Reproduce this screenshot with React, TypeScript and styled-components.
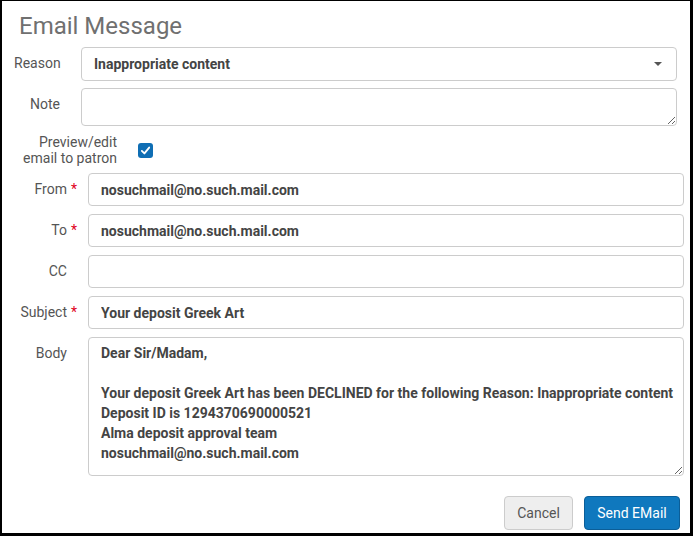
import React from "react";
import styled, { createGlobalStyle } from "styled-components";

const Global = createGlobalStyle`
  html, body { margin: 0; padding: 0; background: #000; }
  body { font-family: Roboto, "Liberation Sans", Arial, sans-serif; }
  * { box-sizing: border-box; }
`;

const Frame = styled.div`
  width: 693px;
  height: 536px;
  border-style: solid;
  border-color: #000;
  border-width: 1px 3px 3px 2px;
  background: #fff;
  padding: 9px 0 0 0;
  display: flex;
  flex-direction: column;
`;

const Title = styled.h1`
  margin: 0 0 5px 0;
  padding-left: 17px;
  font-size: 24px;
  line-height: 32px;
  font-weight: 400;
  color: #707070;
`;

const Section = styled.div<{ $label: number; $gap: number; $right: number; $rowGap: number }>`
  display: grid;
  grid-template-columns: ${(p) => p.$label}px 1fr;
  column-gap: ${(p) => p.$gap}px;
  row-gap: ${(p) => p.$rowGap}px;
  padding: 0 ${(p) => p.$right}px 0 12px;
  align-items: start;
`;

const Label = styled.label<{ $left?: boolean }>`
  font-size: 14px;
  line-height: 20px;
  padding-top: 6px;
  color: #555;
  text-align: ${(p) => (p.$left ? "left" : "right")};
  white-space: nowrap;
`;

const Req = styled.span<{ $hidden?: boolean }>`
  color: #e0001b;
  margin-left: 4px;
  visibility: ${(p) => (p.$hidden ? "hidden" : "visible")};
`;

const SelectBox = styled.div`
  height: 34px;
  border: 1px solid #ccc;
  border-radius: 4px;
  padding: 0 14px 0 12px;
  display: flex;
  align-items: center;
  justify-content: space-between;
  font-size: 14px;
  font-weight: 700;
  color: #444;
  background: #fff;
`;

const Caret = styled.span`
  width: 0;
  height: 0;
  border-left: 4px solid transparent;
  border-right: 4px solid transparent;
  border-top: 4px solid #555;
`;

const Area = styled.textarea<{ $h: number }>`
  display: block;
  width: 100%;
  height: ${(p) => p.$h}px;
  border: 1px solid #ccc;
  border-radius: 4px;
  padding: 5px 4px 5px 12px;
  font-family: Roboto, "Liberation Sans", Arial, sans-serif;
  font-size: 14px;
  line-height: 20px;
  font-weight: 700;
  color: #444;
  resize: vertical;
  outline: none;
  overflow: hidden;
  white-space: pre;
`;

const Input = styled.input`
  display: block;
  width: 100%;
  height: 33px;
  border: 1px solid #ccc;
  border-radius: 4px;
  padding: 0 12px;
  font-family: Roboto, "Liberation Sans", Arial, sans-serif;
  font-size: 14px;
  font-weight: 700;
  color: #444;
  outline: none;
`;

const CheckRow = styled.div`
  display: grid;
  grid-template-columns: 103px 14px;
  column-gap: 21px;
  align-items: center;
  padding: 8px 0 7px 12px;
`;

const CheckLabel = styled.div`
  font-size: 14px;
  line-height: 16px;
  color: #555;
  text-align: right;
`;

const CheckBox = styled.span`
  width: 15px;
  height: 15px;
  border-radius: 3px;
  background: #0f6eb4;
  display: flex;
  align-items: center;
  justify-content: center;
  margin-top: 1px;
`;

const Footer = styled.div`
  display: flex;
  justify-content: flex-end;
  gap: 11px;
  padding: 20px 10px 0 0;
`;

const Button = styled.button<{ $primary?: boolean }>`
  height: 34px;
  padding: 0 12px;
  border-radius: 4px;
  font-family: Roboto, "Liberation Sans", Arial, sans-serif;
  font-size: 14px;
  border: 1px solid ${(p) => (p.$primary ? "#0b5e98" : "#ccc")};
  background: ${(p) => (p.$primary ? "#0f78be" : "#eeeeee")};
  color: ${(p) => (p.$primary ? "#fff" : "#555")};
  min-width: ${(p) => (p.$primary ? 96 : 69)}px;
`;

const bodyText = `Dear Sir/Madam,

Your deposit Greek Art has been DECLINED for the following Reason: Inappropriate content
Deposit ID is 1294370690000521
Alma deposit approval team
nosuchmail@no.such.mail.com`;

export default function App() {
  return (
    <>
      <Global />
      <Frame>
        <Title>Email Message</Title>
        <Section $label={46} $gap={21} $right={13} $rowGap={7}>
          <Label $left>Reason</Label>
          <SelectBox>
            <span>Inappropriate content</span>
            <Caret />
          </SelectBox>
          <Label>Note</Label>
          <Area $h={38} defaultValue="" />
        </Section>
        <CheckRow>
          <CheckLabel>
            Preview/edit
            <br />
            email to patron
          </CheckLabel>
          <CheckBox>
            <svg width="11" height="11" viewBox="0 0 12 12">
              <path d="M2 6.4 L4.8 9.2 L10 2.8" fill="none" stroke="#fff" strokeWidth="2" strokeLinecap="round" strokeLinejoin="round" />
            </svg>
          </CheckBox>
        </CheckRow>
        <Section $label={63} $gap={11} $right={6} $rowGap={8}>
          <Label>
            From<Req>*</Req>
          </Label>
          <Input defaultValue="nosuchmail@no.such.mail.com" />
          <Label>
            To<Req>*</Req>
          </Label>
          <Input defaultValue="nosuchmail@no.such.mail.com" />
          <Label>
            CC<Req $hidden>*</Req>
          </Label>
          <Input defaultValue="" />
          <Label>
            Subject<Req>*</Req>
          </Label>
          <Input defaultValue="Your deposit Greek Art" />
          <Label>
            Body<Req $hidden>*</Req>
          </Label>
          <Area $h={139} wrap="off" defaultValue={bodyText} />
        </Section>
        <Footer>
          <Button>Cancel</Button>
          <Button $primary>Send EMail</Button>
        </Footer>
      </Frame>
    </>
  );
}
